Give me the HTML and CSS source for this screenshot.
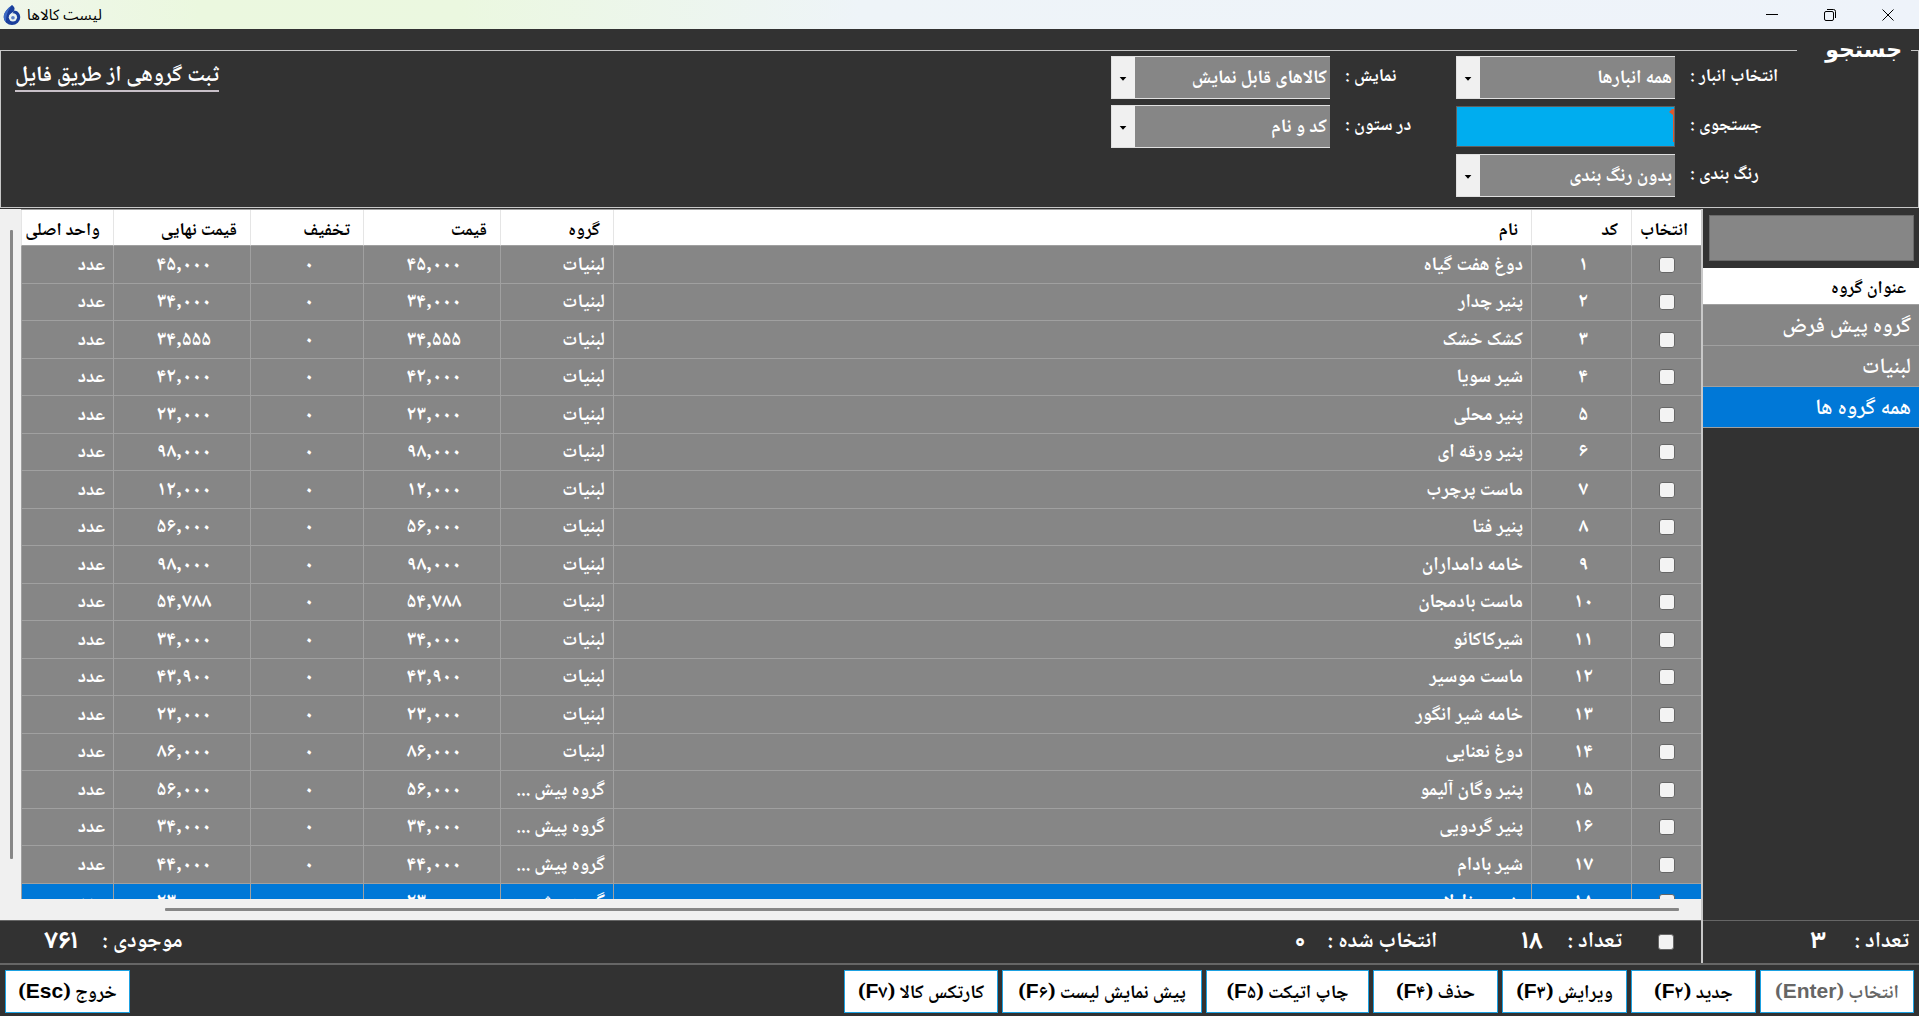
FILE: index.html
```html
<!DOCTYPE html>
<html lang="fa" dir="rtl">
<head>
<meta charset="utf-8">
<title>لیست کالاها</title>
<link rel="stylesheet" href="styles.css">
</head>
<body>
<header class="titlebar" dir="ltr">
  <svg class="app-icon" width="20" height="24" viewBox="0 0 20 24" aria-hidden="true">
    <path d="M10 1C5 5 1 9 1 14.500a9 8.500 0 0 0 18 0C19 10 16 7 12 7c2-2 0-4.500-2-6z" fill="#1a3f9c"/>
    <path d="M10 1C5 5 1 9 1 14.500c0 2 1 4 2.500 5.500C3 13 6 6 10 1z" fill="#3d6bc4"/>
    <circle cx="11" cy="14.500" r="4.500" fill="#e9f2f0"/>
    <path d="M12 8c-3 2-5 4-5 7l2 1c0-3 1-5 3-8z" fill="#e9f2f0"/>
    <circle cx="11" cy="15" r="2" fill="#5c80c8"/>
  </svg>
  <h1 class="window-title" dir="rtl">لیست کالاها</h1>
  <button class="window-button" type="button" aria-label="کوچک کردن"><svg width="14" height="14" viewBox="0 0 14 14"><path d="M1 6.500h12" stroke="#000" fill="none"/></svg></button>
  <button class="window-button" type="button" aria-label="بازگرداندن"><svg width="14" height="14" viewBox="0 0 14 14" fill="none" stroke="#000"><rect x="1.500" y="3.500" width="9" height="9" rx="1.500"/><path d="M4 1.500h6.500a2 2 0 0 1 2 2V10"/></svg></button>
  <button class="window-button" type="button" aria-label="بستن"><svg width="14" height="14" viewBox="0 0 14 14"><path d="M1.500 1.500l11 11M12.500 1.500l-11 11" stroke="#000" fill="none"/></svg></button>
</header>

<fieldset class="search">
  <legend>جستجو</legend>
  <div class="search-grid">
    <label for="store">انتخاب انبار :</label>
    <div class="combo"><select id="store"><option>همه انبارها</option></select><svg class="arrow" viewBox="0 0 24 41"><path d="M8 20h7l-3.500 4z"/></svg></div>
    <label for="view">نمایش :</label>
    <div class="combo"><select id="view"><option>کالاهای قابل نمایش</option></select><svg class="arrow" viewBox="0 0 24 41"><path d="M8 20h7l-3.500 4z"/></svg></div>
    <a class="import-link" href="#">ثبت گروهی از طریق فایل</a>
    <label for="query">جستجوی :</label>
    <div class="query-box"><input id="query" type="text"><svg class="caret" width="5" height="33" viewBox="0 0 5 33"><path d="M3 0h2v33H4V6L0 3z" fill="#e0582c"/></svg></div>
    <label for="column">در ستون :</label>
    <div class="combo"><select id="column"><option>کد و نام</option></select><svg class="arrow" viewBox="0 0 24 41"><path d="M8 20h7l-3.500 4z"/></svg></div>
    <label class="row-start" for="coloring">رنگ بندی :</label>
    <div class="combo"><select id="coloring"><option>بدون رنگ بندی</option></select><svg class="arrow" viewBox="0 0 24 41"><path d="M8 20h7l-3.500 4z"/></svg></div>
  </div>
</fieldset>

<main class="workspace">
  <aside class="groups">
    <input class="group-filter" type="text" aria-label="جستجوی گروه">
    <table class="group-table">
      <thead><tr><th>عنوان گروه</th></tr></thead>
      <tbody>
        <tr><td>گروه پیش فرض</td></tr>
        <tr><td>لبنیات</td></tr>
        <tr class="selected"><td>همه گروه ها</td></tr>
      </tbody>
    </table>
    <div class="status groups-status"><span>تعداد :</span><b>۳</b></div>
  </aside>

  <section class="items">
    <div class="grid-area">
      <div class="table-clip">
        <table class="item-table">
          <colgroup><col class="c-check"><col class="c-code"><col><col class="c-mid"><col class="c-price"><col class="c-mid"><col class="c-price"><col class="c-unit"></colgroup>
          <thead><tr><th>انتخاب</th><th>کد</th><th>نام</th><th>گروه</th><th>قیمت</th><th>تخفیف</th><th>قیمت نهایی</th><th>واحد اصلی</th></tr></thead>
          <tbody id="rows"></tbody>
        </table>
      </div>
      <div class="v-scroll"><div class="v-thumb"></div></div>
    </div>
    <div class="h-scroll"><div class="h-thumb"></div></div>
    <div class="status">
      <input type="checkbox" aria-label="انتخاب همه">
      <span>تعداد :</span><b class="n-count">۱۸</b>
      <span>انتخاب شده :</span><b class="n-picked">۰</b>
      <span class="s-stock">موجودی :</span><b class="n-stock">۷۶۱</b>
    </div>
  </section>
</main>

<footer class="actions">
  <button class="w-l" type="button" disabled>انتخاب (<b>Enter</b>)</button>
  <button class="w-s" type="button">جدید (<b>F</b>۲)</button>
  <button class="w-s" type="button">ویرایش (<b>F</b>۳)</button>
  <button class="w-s" type="button">حذف (<b>F</b>۴)</button>
  <button class="w-m" type="button">چاپ اتیکت (<b>F</b>۵)</button>
  <button class="w-xl" type="button">پیش نمایش لیست (<b>F</b>۶)</button>
  <button class="w-l" type="button">کارتکس کالا (<b>F</b>۷)</button>
  <button class="w-s exit" type="button">خروج (<b>Esc</b>)</button>
</footer>
<script src="rows.js"></script>
</body>
</html>
```
FILE: styles.css
```css
* { box-sizing: border-box; }

body {
  margin: 0;
  height: 100vh;
  display: flex;
  flex-direction: column;
  overflow: hidden;
  background: #323232;
  color: #fff;
  font: bold 18px/24px "Noto Naskh Arabic", "Liberation Sans", "DejaVu Sans", sans-serif;
}

button, input, select { font: inherit; color: inherit; }

/* Title bar */
.titlebar {
  flex: none;
  height: 29px;
  display: flex;
  align-items: center;
  padding: 0 2px;
  background: linear-gradient(90deg, #eff6ea 0, #ebf8df 200px, #ebf8e0 460px, #eef4f8 860px, #eef3fa 100%);
  color: #000;
}
.app-icon { width: 20px; height: 22px; }
.window-title {
  flex: 1;
  margin: 0;
  padding-left: 5px;
  font: 15px/24px "Noto Sans Arabic", "DejaVu Sans", sans-serif;
  text-align: left;
}
.window-button {
  width: 58px;
  height: 29px;
  padding: 0;
  border: 0;
  background: none;
  display: grid;
  place-items: center;
}

/* Search box */
.search {
  flex: none;
  margin: 15px 0 0;
  padding: 0 0 10px;
  border: 1px solid #c8c8c8;
  min-width: 0;
}
.search legend {
  margin-right: 7px;
  padding: 0 9px 0 28px;
  font: bold 22px/12px "DejaVu Sans", sans-serif;
}
.search-grid {
  display: grid;
  grid-template-columns: 228px 219px 96px 219px 1fr;
  grid-auto-rows: 43px;
  gap: 6px 15px;
}
.search-grid label { text-align: left; line-height: 43px; }
.row-start { grid-column: 1; }
.combo {
  display: flex;
  border: 1px solid #e0e0e0;
  border-width: 1px 0 1px 1px;
}
.combo select {
  flex: 1;
  min-width: 0;
  appearance: none;
  border: 0;
  border-radius: 0;
  padding: 2px 3px 0;
  background: #868686;
  color: #fff;
  font-size: 19px;
}
.arrow { width: 23px; height: 41px; background: #f0f0f0; }
.query-box { position: relative; height: 41px; align-self: center; }
.query-box input {
  width: 100%;
  height: 41px;
  border: 1px solid #606060;
  background: #00adef;
  outline: none;
}
.caret { position: absolute; top: 3px; right: 1px; }
.import-link {
  justify-self: end;
  align-self: center;
  margin-left: 14px;
  color: #fff;
  font-size: 22px;
  line-height: 27px;
  text-decoration: none;
  border-bottom: 2px solid #c8c0c8;
}

/* Workspace */
.workspace { flex: 1; min-height: 0; display: flex; margin-top: 1px; }
.groups {
  width: 218px;
  display: flex;
  flex-direction: column;
  border-left: 2px solid #c8c8c8;
}
.group-filter {
  height: 46px;
  margin: 6px 5px 7px 6px;
  border: 1px solid #6a6a6a;
  background: #868686;
}
table { border-collapse: separate; border-spacing: 0; width: 100%; table-layout: fixed; }
th {
  background: #fff;
  color: #000;
  text-align: right;
  border-bottom: 1px solid #a0a0a0;
}
td { background: #868686; border-bottom: 1px solid #a0a0a0; }
.selected td { background: #0078d7; }
.group-table th { height: 37px; padding: 6px 13px 0; }
.group-table td { height: 41px; padding: 3px 8px 0; font-size: 22px; font-weight: 600; }

.items { flex: 1; min-width: 0; display: flex; flex-direction: column; }
.grid-area { flex: 1; min-height: 0; display: flex; }
.table-clip { flex: 1; min-width: 0; overflow: hidden; border-top: 1px solid #a0a0a0; }
.c-check { width: 70px; }
.c-code { width: 100px; }
.c-mid { width: 113px; }
.c-price { width: 137px; }
.c-unit { width: 92px; }
.item-table th {
  height: 36px;
  padding: 6px 13px 0;
  white-space: nowrap;
  border-left: 1px solid #e5e5e5;
}
.item-table td {
  height: 38px;
  padding: 2px 8px 0;
  border-left: 1px solid #a0a0a0;
  white-space: nowrap;
  overflow: hidden;
  font-size: 19px;
}
.item-table tr:nth-child(even) td { height: 37px; }
.item-table td.num { padding-right: 4px; text-align: center; font-size: 20px; }
.item-table td:first-child { padding-top: 0; }

input[type="checkbox"] {
  appearance: none;
  display: block;
  width: 16px;
  height: 16px;
  margin: 0 auto;
  border: 1px solid #666;
  border-radius: 3px;
  background: #f3f3f3;
}
.v-scroll { width: 21px; background: #f0f0f0; padding: 21px 8px 0 0; }
.v-thumb { width: 3px; height: 94%; background: #868686; border-radius: 1px; }
.h-scroll { flex: none; height: 21px; background: #f0f0f0; padding: 9px 22px 0 165px; }
.h-thumb { height: 3px; background: #868686; border-radius: 1px; }

.status {
  flex: none;
  height: 43px;
  display: flex;
  align-items: center;
  border-top: 1px solid #666;
  font-size: 22px;
}
.status b { font: bold 24px/24px Vazirmatn, "DejaVu Sans", sans-serif; }
.status input[type="checkbox"] { margin: 0 27px 0 36px; }
.groups-status { margin-top: auto; padding-right: 10px; gap: 28px; }
.n-count { width: 130px; padding-right: 24px; }
.n-picked { padding-right: 22px; }
.s-stock { margin-right: auto; }
.n-stock { width: 102px; padding-right: 24px; }

/* Action buttons */
.actions {
  flex: none;
  display: flex;
  gap: 4px;
  padding: 5px 5px 3px;
  border-top: 2px solid #666;
}
.actions button {
  height: 43px;
  padding: 2px 0 0;
  border: 1px solid #1ba1e2;
  background: #fff;
  color: #000;
  font-size: 19px;
  white-space: nowrap;
}
.actions button:disabled { color: #666; }
.actions b { font: bold 21px/24px "Liberation Sans", Arial, sans-serif; }
.w-s { width: 125px; }
.w-m { width: 163px; }
.w-l { width: 154px; }
.w-xl { width: 200px; }
.actions .exit { margin-right: auto; }
```
FILE: rows.js
```js
const dairy = 'لبنیات';
const general = 'گروه پیش ...';
const items = [
  ['دوغ هفت گیاه', dairy, '۴۵,۰۰۰'],
  ['پنیر چدار', dairy, '۳۴,۰۰۰'],
  ['کشک خشک', dairy, '۳۴,۵۵۵'],
  ['شیر سویا', dairy, '۴۲,۰۰۰'],
  ['پنیر محلی', dairy, '۲۳,۰۰۰'],
  ['پنیر ورقه ای', dairy, '۹۸,۰۰۰'],
  ['ماست پرچرب', dairy, '۱۲,۰۰۰'],
  ['پنیر فتا', dairy, '۵۶,۰۰۰'],
  ['خامه دامداران', dairy, '۹۸,۰۰۰'],
  ['ماست بادمجان', dairy, '۵۴,۷۸۸'],
  ['شیرکاکائو', dairy, '۳۴,۰۰۰'],
  ['ماست موسیر', dairy, '۴۳,۹۰۰'],
  ['خامه شیر انگور', dairy, '۲۳,۰۰۰'],
  ['دوغ نعنایی', dairy, '۸۶,۰۰۰'],
  ['پنیر وگان آلیمو', general, '۵۶,۰۰۰'],
  ['پنیر گردویی', general, '۳۴,۰۰۰'],
  ['شیر بادام', general, '۴۴,۰۰۰'],
  ['پنیر موزارلا', general, '۲۳,۰۰۰']
];
const body = document.getElementById('rows');
items.forEach(([name, group, price], i) => {
  const row = body.insertRow();
  if (i === items.length - 1) row.className = 'selected';
  const box = document.createElement('input');
  box.type = 'checkbox';
  box.setAttribute('aria-label', name);
  row.insertCell().append(box);
  const code = (i + 1).toLocaleString('fa-IR');
  [[code, 1], [name, 0], [group, 0], [price, 1], ['۰', 1], [price, 1], ['عدد', 0]].forEach(([text, numeric]) => {
    const cell = row.insertCell();
    cell.textContent = text;
    if (numeric) cell.className = 'num';
  });
});
```
